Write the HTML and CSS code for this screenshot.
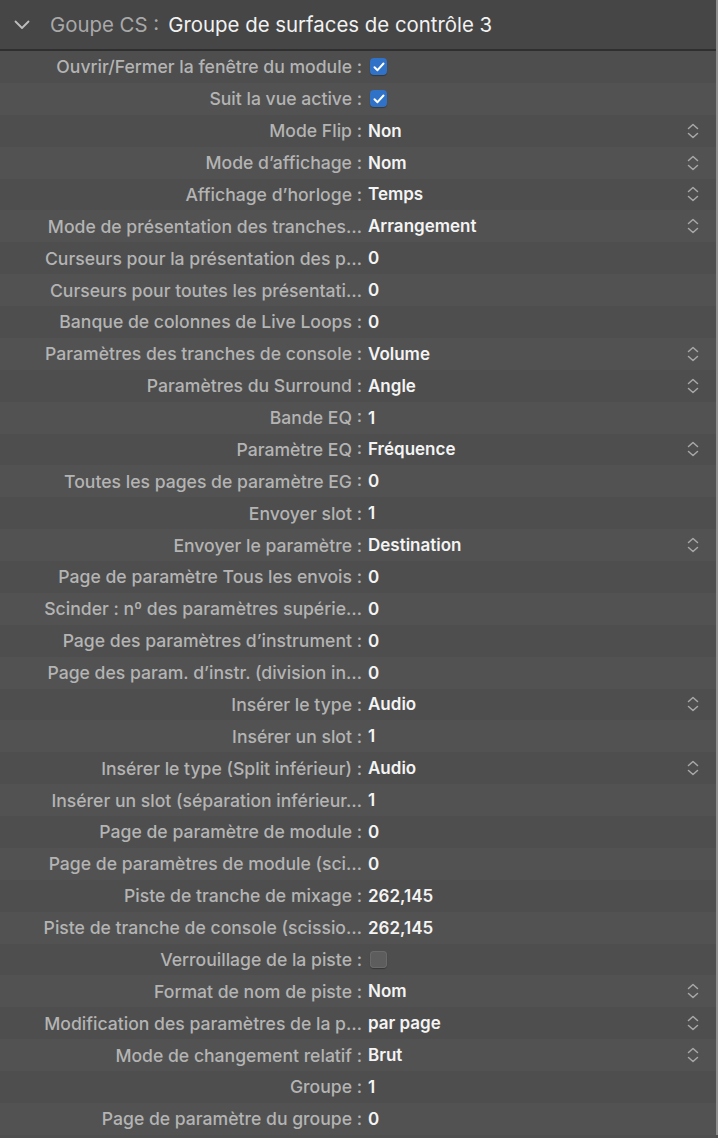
FILE: index.html
```html
<!DOCTYPE html>
<html lang="fr">
<head>
    <meta charset="UTF-8">
    <meta name="viewport" content="width=device-width, initial-scale=1.0">
    <title>Groupe CS</title>
    <link rel="stylesheet" href="styles.css">
</head>
<body>

<div class="panel">
    <div class="header">
        <svg class="chevron" width="16" height="10" viewBox="0 0 16 10"><path d="M1.5 1.5 L8 8 L14.5 1.5" fill="none" stroke="#bdbdbd" stroke-width="1.8" stroke-linecap="round" stroke-linejoin="round"/></svg>
        <span class="header-label">Goupe CS :</span>
        <span class="header-value">Groupe de surfaces de contrôle 3</span>
    </div>
    <div id="rows"></div>
</div>

<script>
    // type: c = checkbox on, x = checkbox off, s = popup (stepper), t = plain text
    const rows = [
        ['Ouvrir/Fermer la fenêtre du module :', 'c'],
        ['Suit la vue active :', 'c'],
        ['Mode Flip :', 's', 'Non'],
        ['Mode d’affichage :', 's', 'Nom'],
        ['Affichage d’horloge :', 's', 'Temps'],
        ['Mode de présentation des tranches…', 's', 'Arrangement'],
        ['Curseurs pour la présentation des p…', 't', '0'],
        ['Curseurs pour toutes les présentati…', 't', '0'],
        ['Banque de colonnes de Live Loops :', 't', '0'],
        ['Paramètres des tranches de console :', 's', 'Volume'],
        ['Paramètres du Surround :', 's', 'Angle'],
        ['Bande EQ :', 't', '1'],
        ['Paramètre EQ :', 's', 'Fréquence'],
        ['Toutes les pages de paramètre EG :', 't', '0'],
        ['Envoyer slot :', 't', '1'],
        ['Envoyer le paramètre :', 's', 'Destination'],
        ['Page de paramètre Tous les envois :', 't', '0'],
        ['Scinder : nº des paramètres supérie…', 't', '0'],
        ['Page des paramètres d’instrument :', 't', '0'],
        ['Page des param. d’instr. (division in…', 't', '0'],
        ['Insérer le type :', 's', 'Audio'],
        ['Insérer un slot :', 't', '1'],
        ['Insérer le type (Split inférieur) :', 's', 'Audio'],
        ['Insérer un slot (séparation inférieur…', 't', '1'],
        ['Page de paramètre de module :', 't', '0'],
        ['Page de paramètres de module (sci…', 't', '0'],
        ['Piste de tranche de mixage :', 't', '262,145'],
        ['Piste de tranche de console (scissio…', 't', '262,145'],
        ['Verrouillage de la piste :', 'x'],
        ['Format de nom de piste :', 's', 'Nom'],
        ['Modification des paramètres de la p…', 's', 'par page'],
        ['Mode de changement relatif :', 's', 'Brut'],
        ['Groupe :', 't', '1'],
        ['Page de paramètre du groupe :', 't', '0']
    ];

    const check = '<svg width="12" height="10" viewBox="0 0 12 10"><path d="M1.5 5.2 L4.5 8.2 L10.5 1.5" fill="none" stroke="#fff" stroke-width="2" stroke-linecap="round" stroke-linejoin="round"/></svg>';
    const stepper = '<svg class="stepper" width="14" height="18" viewBox="0 0 14 18"><path d="M2.5 6.5 L7 2.5 L11.5 6.5 M2.5 11.5 L7 15.5 L11.5 11.5" fill="none" stroke="#a8a8a8" stroke-width="1.5" stroke-linecap="round" stroke-linejoin="round"/></svg>';

    const container = document.getElementById('rows');
    rows.forEach((r) => {
        const row = document.createElement('div');
        row.className = 'row';
        let value = '';
        if (r[1] === 'c') value = '<span class="checkbox on">' + check + '</span>';
        else if (r[1] === 'x') value = '<span class="checkbox"></span>';
        else value = '<span class="value">' + r[2] + '</span>';
        row.innerHTML = `
            <span class="label">${r[0]}</span>
            ${value}
            ${r[1] === 's' ? stepper : ''}
        `;
        container.appendChild(row);
    });
</script>
</body>
</html>
```

FILE: styles.css
```css
body {
    margin: 0;
    background-color: #4f4f4f;
    font-family: Inter, "Noto Sans", sans-serif;
}
.panel {
    width: 718px;
    border-right: 2px solid #8e8e8e;
    box-sizing: border-box;
}
.header {
    height: 49px;
    display: flex;
    align-items: center;
    background-color: #464646;
    border-bottom: 2px solid #2f2f2f;
    font-size: 20.4px;
}
.chevron {
    margin-left: 14px;
    margin-right: 20px;
}
.header-label {
    color: #a9a9a9;
    margin-right: 9px;
}
.header-value {
    color: #f2f2f2;
}
.row {
    height: 31.88px;
    display: flex;
    align-items: center;
    font-size: 17px;
}
.row:nth-child(odd) {
    background-color: #4e4e4e;
}
.row:nth-child(even) {
    background-color: #525252;
}
.label {
    width: 362px;
    padding-left: 20px;
    box-sizing: border-box;
    text-align: right;
    color: #b4b4b4;
    font-size: 17.6px;
    font-weight: 500;
    white-space: nowrap;
    overflow: hidden;
}
.value {
    margin-left: 6px;
    color: #f4f4f4;
    font-weight: 600;
}
.checkbox {
    margin-left: 8px;
    width: 17px;
    height: 17px;
    border-radius: 4px;
    background-color: #5d5d5d;
    box-shadow: inset 0 0 0 1px #6a6a6a, 0 1px 1px rgba(0,0,0,0.3);
    display: flex;
    align-items: center;
    justify-content: center;
}
.checkbox.on {
    background-color: #2f72c8;
    box-shadow: 0 1px 1px rgba(0,0,0,0.3);
}
.stepper {
    margin-left: auto;
    margin-right: 16px;
}
```
